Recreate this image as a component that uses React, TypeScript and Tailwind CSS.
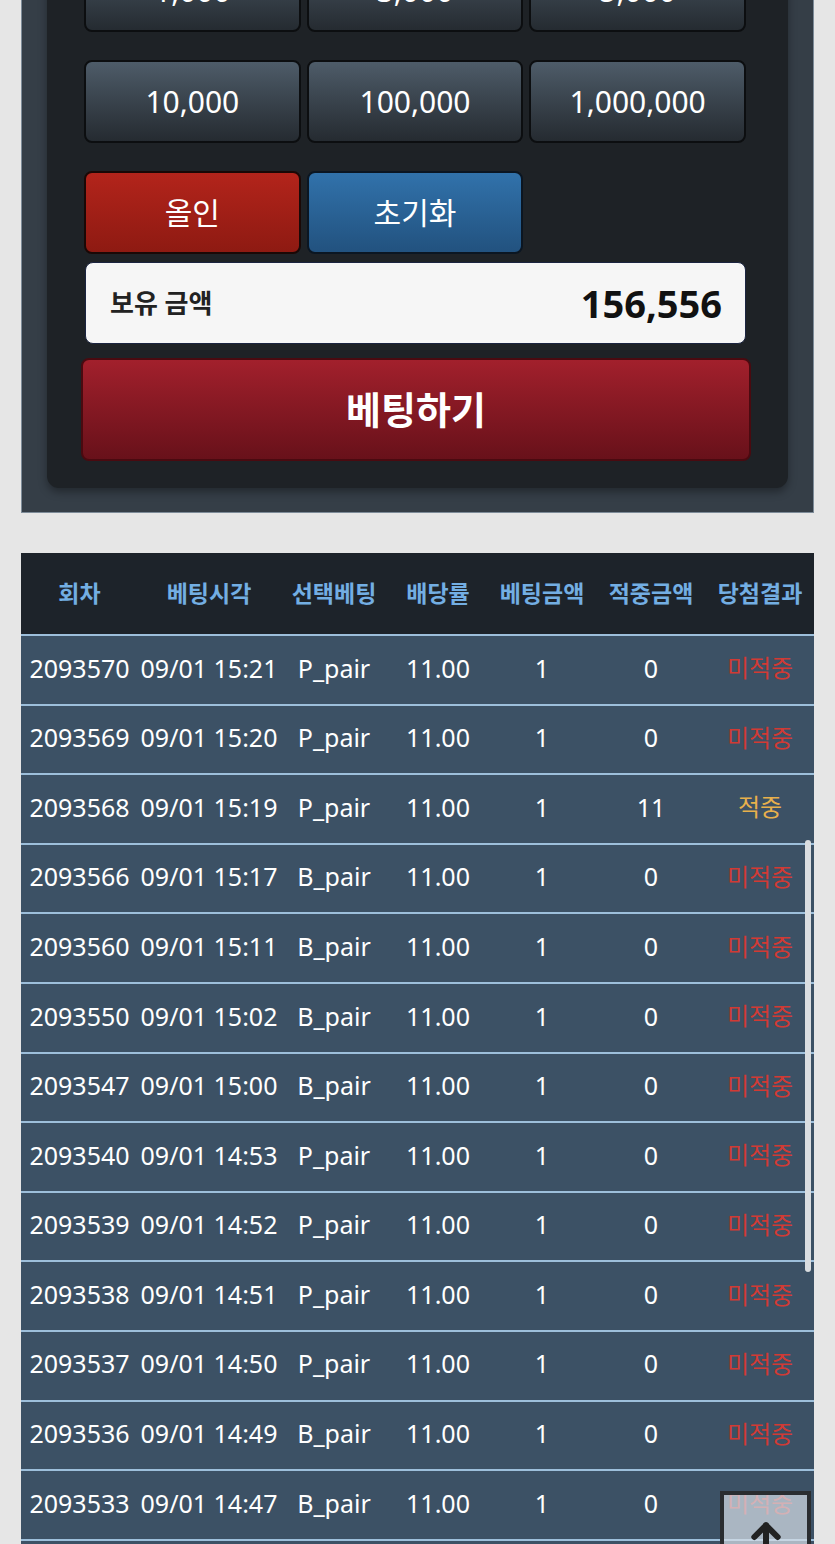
import { ArrowUp } from 'lucide-react';

const chips = ['1,000', '3,000', '5,000', '10,000', '100,000', '1,000,000'];

const rows = [
  ['2093570', '09/01 15:21', 'P_pair', '0', false],
  ['2093569', '09/01 15:20', 'P_pair', '0', false],
  ['2093568', '09/01 15:19', 'P_pair', '11', true],
  ['2093566', '09/01 15:17', 'B_pair', '0', false],
  ['2093560', '09/01 15:11', 'B_pair', '0', false],
  ['2093550', '09/01 15:02', 'B_pair', '0', false],
  ['2093547', '09/01 15:00', 'B_pair', '0', false],
  ['2093540', '09/01 14:53', 'P_pair', '0', false],
  ['2093539', '09/01 14:52', 'P_pair', '0', false],
  ['2093538', '09/01 14:51', 'P_pair', '0', false],
  ['2093537', '09/01 14:50', 'P_pair', '0', false],
  ['2093536', '09/01 14:49', 'B_pair', '0', false],
  ['2093533', '09/01 14:47', 'B_pair', '0', false],
  ['2093532', '09/01 14:46', 'B_pair', '0', false],
] as const;

const cols = ['w-[117px]', 'w-[142px]', 'w-[108px]', 'w-[100px]', 'w-[108px]', 'w-[110px]', 'w-[108px]'];
const heads = ['회차', '베팅시각', '선택베팅', '배당률', '베팅금액', '적중금액', '당첨결과'];

const font = "font-['Noto_Sans','Noto_Sans_CJK_KR',sans-serif]";

const App = () => {
  return (
    <div className={`relative min-h-[1544px] overflow-hidden bg-[#e6e6e6] ${font}`}>
      {/* Bet panel */}
      <div className="mx-[21px] -mt-[79px] border-x border-b border-[#7d8b98] bg-[#353e47] px-[25px] pb-[24px]">
        <div className="rounded-b-[12px] bg-[#1e2226] pl-[37px] pr-[42px] pt-[28px] pb-[27px] shadow-[0_4px_8px_rgba(0,0,0,0.35)]">
          <div className="grid grid-cols-3 gap-x-[6px] gap-y-[28px]">
            {chips.map((c) => (
              <div
                key={c}
                className="flex h-[83px] items-center justify-center rounded-[8px] border-2 border-[#0c0e10] bg-gradient-to-b from-[#4e5c69] to-[#252b31] text-[30px] text-white"
              >
                {c}
              </div>
            ))}
            <div className="flex h-[83px] items-center justify-center rounded-[8px] border-2 border-[#1a0806] bg-gradient-to-b from-[#b3241b] to-[#8e1a12] text-[30px] text-white">
              올인
            </div>
            <div className="flex h-[83px] items-center justify-center rounded-[8px] border-2 border-[#0b1622] bg-gradient-to-b from-[#3172ab] to-[#22527f] text-[30px] text-white">
              초기화
            </div>
          </div>

          <div className="mt-[8px] ml-px flex h-[82px] items-center justify-between rounded-[8px] border border-[#1b2440] bg-[#f6f6f6] pl-[24px] pr-[23px]">
            <span className="text-[26px] font-bold text-[#222]">보유 금액</span>
            <span className="text-[38px] font-bold text-[#111]">156,556</span>
          </div>

          <div className="-ml-[3px] -mr-[5px] mt-[14px] flex h-[103px] items-center justify-center rounded-[8px] border-2 border-[#4a0a10] bg-gradient-to-b from-[#a2202c] to-[#68111a] text-[38px] font-bold text-white">
            베팅하기
          </div>
        </div>
      </div>

      {/* History table */}
      <div className="mx-[21px] mt-[40px] bg-[#3c5165]">
        <div className="flex h-[81px] items-center bg-[#1d232a]">
          {heads.map((h, i) => (
            <div key={h} className={`${cols[i]} text-center text-[23px] font-bold text-[#73aee3]`}>
              {h}
            </div>
          ))}
        </div>
        {rows.map((r) => (
          <div key={r[0]} className="flex h-[69.6px] items-center border-t-2 border-[#9dbfdb] pb-[3px] text-[25px] text-white">
            <div className={`${cols[0]} text-center`}>{r[0]}</div>
            <div className={`${cols[1]} text-center`}>{r[1]}</div>
            <div className={`${cols[2]} text-center`}>{r[2]}</div>
            <div className={`${cols[3]} text-center`}>11.00</div>
            <div className={`${cols[4]} text-center`}>1</div>
            <div className={`${cols[5]} text-center`}>{r[3]}</div>
            <div className={`${cols[6]} text-center text-[24px] ${r[4] ? 'text-[#e8b04c]' : 'text-[#d13a34]'}`}>
              {r[4] ? '적중' : '미적중'}
            </div>
          </div>
        ))}
      </div>

      {/* Overlay scrollbar thumb */}
      <div className="absolute left-[805px] top-[840px] h-[432px] w-[6px] rounded-full bg-[#dadde0]" />

      {/* Scroll to top button */}
      <div className="absolute left-[720px] top-[1491px] flex h-[80px] w-[91px] justify-center border-4 border-[#2a2d30] bg-[rgba(214,222,230,0.72)] pt-[22px]">
        <ArrowUp size={40} strokeWidth={3.6} className="text-[#222]" />
      </div>
    </div>
  );
};

export default App;
